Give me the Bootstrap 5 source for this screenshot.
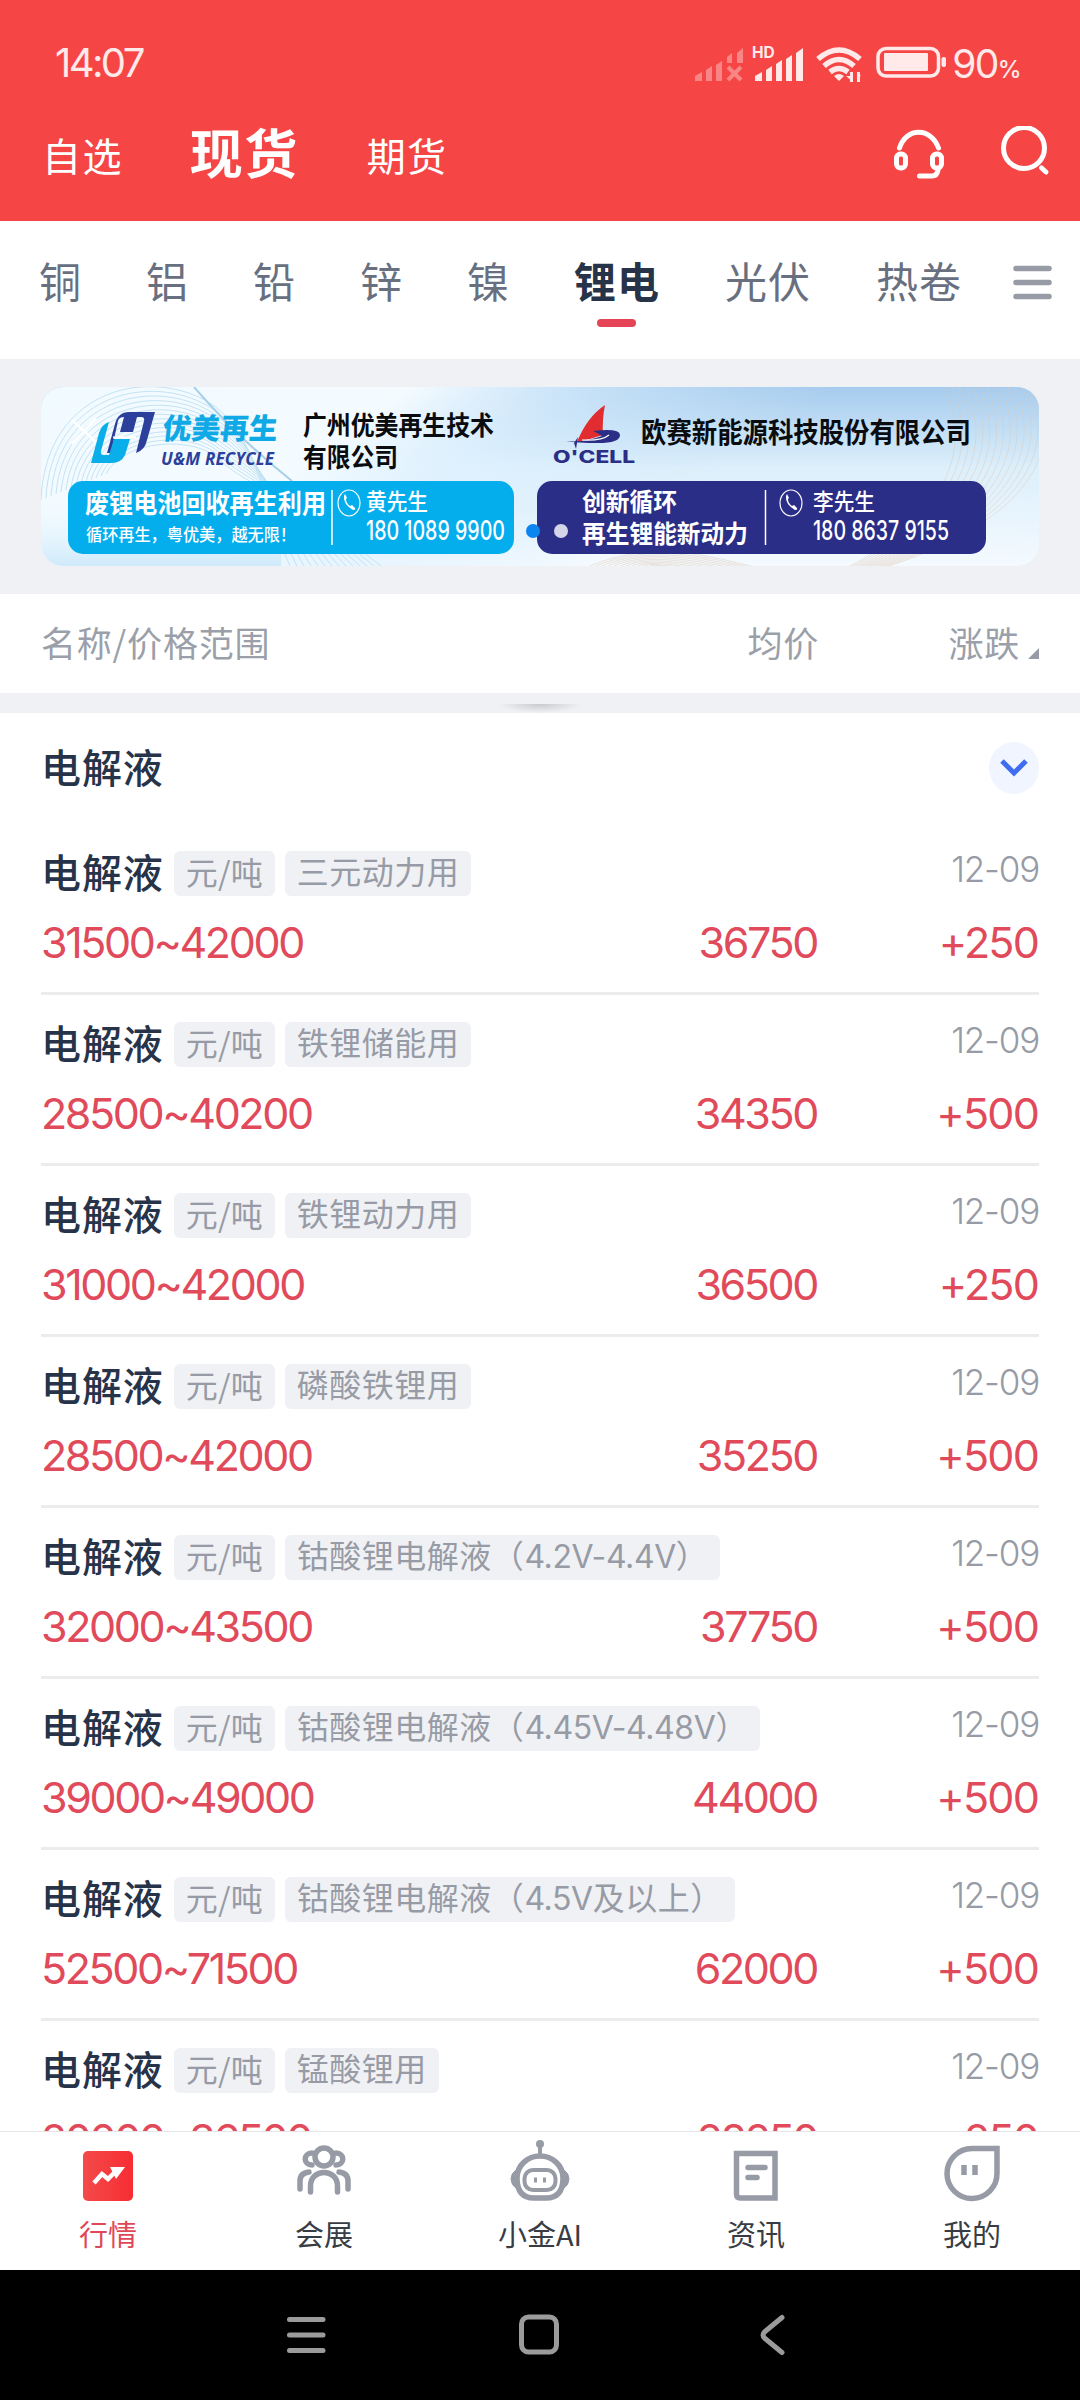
<!DOCTYPE html>
<html lang="zh-CN">
<head>
<meta charset="utf-8">
<meta name="viewport" content="width=device-width, initial-scale=1">
<title>现货行情</title>
<link href="https://cdn.jsdelivr.net/npm/bootstrap@5.3.0/dist/css/bootstrap.min.css" rel="stylesheet">
<style>
  body{width:1080px;height:2400px;overflow:hidden;background:#fff;color:#273349;font-family:Inter,"Noto Sans CJK SC",sans-serif;line-height:1}
  svg{display:block;flex:none}
  .cjk{font-family:"Noto Sans CJK SC",sans-serif}
  .top-bar{background:#f54545;height:221px;color:#fff}
  .status-row{height:126px;padding:0 60px 0 55px;color:#ffe9e9}
  .clock{font-size:40px;letter-spacing:-2.6px}
  .pct{font-size:39px;letter-spacing:-1.6px}
  .pct span{font-size:24px;font-weight:500}
  .main-tabs{height:95px;padding:0 30px 0 42px}
  .main-tabs .tab-s{font-size:39px;letter-spacing:1.4px;line-height:57px}
  .main-tabs .tab-l{font-size:53px;font-weight:700;line-height:50px;letter-spacing:1.4px;margin:0 68px 0 67px}
  .metal-tabs{height:139px;padding:0 27px 0 39px;color:#68707f;font-size:42px;border-bottom:1px solid #f0f1f3}
  .metal-tabs a{color:inherit;text-decoration:none;line-height:69px;letter-spacing:1px}
  .metal-tabs .now{color:#273349;font-weight:700;position:relative}
  .metal-tabs .now::after{content:"";position:absolute;left:23px;top:74px;width:39px;height:8px;border-radius:4px;background:#e64557}
  .ad-wrap{background:#f0f1f4;padding:27px 41px 28px;height:234px}
  .ad-wrap svg{border-radius:22px}
  .col-head{height:99px;padding:0 41px 4px;color:#9a9fa9;font-size:35px;letter-spacing:.8px}
  .col-head .avg{width:300px;text-align:right}
  .col-head .chg{width:220px}
  .strip{height:20px;background:#f0f1f4}
  .handle{width:84px;height:9px;margin-top:11px;background:radial-gradient(ellipse 50% 100% at 50% 0,#c9cacd,#f0f1f4)}
  .market{height:1418px;overflow:hidden;padding:0 41px}
  .sec-head{height:111px;padding-bottom:1px}
  .nm{font-size:40px;letter-spacing:.9px;font-weight:500;color:#273349;margin-top:-4px}
  .quote{height:171px;border-bottom:3px solid #ececed;padding-top:24px}
  .quote .line1{height:50px}
  .tagx{background:#f0f1f4;border-radius:6px;height:45px;line-height:44px;font-size:32px;letter-spacing:.5px;color:#979ba5;padding:0 12px;margin-left:10px;white-space:pre}
  .tagx.cjk{line-height:41px;letter-spacing:.2px}
  .tagx i{font-style:normal;letter-spacing:-.4px}
  .day{font-size:35px;color:#979ba5;font-weight:300;letter-spacing:-1.2px;margin-top:-8px}
  .line2{color:#e04a5a;font-size:43px;letter-spacing:-2.4px;margin-top:19px;line-height:50px}
  .line2 .rng{width:476px}.line2 .mid{width:301px;text-align:right;padding-right:1px}.line2 .dif{width:221px;text-align:right;letter-spacing:-1.8px;padding-right:1px}
  .tabs-bottom{height:139px;border-top:1px solid #e5e6e8;background:#fff;font-size:29px;color:#383c44}
  .tabs-bottom>div{width:216px;padding-top:8px}
  .tabs-bottom .lbl{line-height:40px;margin-top:7px}
  .sysnav{background:#000;height:130px}
</style>
</head>
<body>
<header class="top-bar">
  <div class="status-row d-flex align-items-center justify-content-between">
    <span class="clock">14:07</span>
    <div class="d-flex align-items-center">
      <svg width="257" height="40" viewBox="696 44 257 40" fill="#ffe9e9">
        <g opacity=".4"><path d="M696 82v-5l7-4v9zM707 82V71l6-4v15zM717 82V66l6-4v20zM728 64v-6l5-4v10zM738 64V54l6-5v15z"/><path d="M729 68l13 13M742 68l-13 13" stroke="#ffe9e9" stroke-width="4"/></g>
        <path d="M756 82v-5l7-4v9zM767 82V71l6-4v15zM777 82V65l6-4v21zM787 82V60l6-4v26zM797 82V54l7-5v33z"/>
        <text x="753" y="59" font-size="15.500" font-weight="700" font-family="Inter">HD</text>
        <g fill="none" stroke="#ffe9e9" stroke-width="5.500"><path d="M819 60Q840 42 861 60"/><path d="M825 67Q840 54 855 67"/><path d="M831 73Q840 66 849 73"/></g>
        <path d="M835 77q5-4 10 0l-5 5zM851 73h3v10h-3zM858 73h3v10h-3z"/><path d="M847 77h7v6zM858 73l4 4h-4z"/>
        <rect x="879" y="49.500" width="60.500" height="27.500" rx="8" fill="none" stroke="#ffe9e9" stroke-width="3.500"/><rect x="885" y="54" width="44" height="18" rx="1"/><rect x="942.500" y="58" width="4.500" height="10" rx="2"/>
      </svg>
      <span class="pct">90<span>%</span></span>
    </div>
  </div>
  <nav class="main-tabs cjk d-flex align-items-start">
    <span class="tab-s">自选</span><span class="tab-l">现货</span><span class="tab-s">期货</span>
    <svg class="ms-auto" width="160" height="56" viewBox="890 126 160 56" fill="none" stroke="#fff" stroke-width="5" stroke-linecap="round"><path d="M899.500 148C906 127 931 127 938.500 148"/><rect x="896.500" y="154" width="9" height="14" rx="4"/><rect x="932.500" y="154" width="9" height="14" rx="4"/><path d="M938 169v1q-1 6-6 6H919.500"/><circle cx="1024" cy="148" r="20.500"/><path d="M1041.500 168l4.500 4"/></svg>
  </nav>
</header>
<nav class="metal-tabs cjk d-flex justify-content-between pt-4">
  <div class="d-flex w-100" id="metals">
    <a style="width:107px">铜</a><a style="width:107px">铝</a><a style="width:107px">铅</a><a style="width:107px">锌</a><a style="width:107px">镍</a><a class="now" style="width:151px">锂电</a><a style="width:151px">光伏</a><a>热卷</a>
  </div>
  <svg class="mt-3" width="40" height="40" viewBox="0 0 40 40" stroke="#979ba5" stroke-width="5.500" stroke-linecap="round"><path d="M3 7.500h33M3 21.500h33M3 35.500h33"/></svg>
</nav>
<section class="ad-wrap">
  <svg width="998" height="179" viewBox="41 387 998 179" font-family="'Noto Sans CJK SC',sans-serif">
    <defs>
      <linearGradient id="sky" x1="0" y1="0" x2="0" y2="1"><stop offset="0" stop-color="#a6ccee"/><stop offset=".45" stop-color="#dceffb"/><stop offset="1" stop-color="#f4faff"/></linearGradient>
      <linearGradient id="fade" x1="0" y1="0" x2="1" y2=".25"><stop offset="0" stop-color="#f1faff"/><stop offset=".35" stop-color="#f4fbff"/><stop offset=".5" stop-color="#e0f2ff" stop-opacity=".6"/><stop offset=".75" stop-color="#cfe8fa" stop-opacity="0"/></linearGradient>
      <linearGradient id="um" x1="0" y1="0" x2="0" y2="1"><stop offset="0" stop-color="#f6fcff" stop-opacity="0"/><stop offset="1" stop-color="#cfeafa"/></linearGradient>
    </defs>
    <rect x="41" y="387" width="998" height="179" fill="url(#sky)"/><rect x="41" y="387" width="998" height="179" fill="url(#fade)"/><rect x="41" y="490" width="240" height="76" fill="url(#um)"/>
    <g id="waves" fill="none" stroke="#c3e2f3" stroke-width="1"></g><g id="gold" fill="none" stroke="#dfc9b5" stroke-width=".8" opacity=".6"></g>
    <path d="M194 387Q240 440 292 481" stroke="#a7cfe9" stroke-width="2" fill="none"/>
    <path d="M72 420l26 24M96 418l-24 26" stroke="#fff" stroke-width="2.500"/>
    <path fill="#2b3f9b" d="M107 453l8-29q3-12 14-12h26l-8 28q-2 10-11 13l8-32q1-4-3-4h-4l-4 15h-13l4-15q-5 0-6 4l-7 32z"/>
    <path fill="#0aaee9" d="M109 422l-8 29q-1 4 3 4h5l5-16h16l-5 16q-4 8-13 8H91l8-30q3-9 10-11z"/>
    <path d="M113 437.500h23" stroke="#fff" stroke-width="2"/>
    <text x="161" y="439" font-size="29" font-weight="900" fill="#0fa9e6" transform="skewX(-6) translate(47 0)" textLength="115" lengthAdjust="spacingAndGlyphs">优美再生</text>
    <text x="161" y="464.500" font-size="17" font-weight="700" font-style="italic" font-family="Open Sans" fill="#2b3f9b" textLength="113" lengthAdjust="spacing">U&amp;M RECYCLE</text>
    <g fill="#0a0c10" font-weight="700" font-size="26"><text x="303" y="435" textLength="191" lengthAdjust="spacingAndGlyphs">广州优美再生技术</text><text x="303" y="467" textLength="95" lengthAdjust="spacingAndGlyphs">有限公司</text><text x="641" y="443" font-size="28" textLength="330" lengthAdjust="spacingAndGlyphs">欧赛新能源科技股份有限公司</text></g>
    <rect x="68" y="481" width="446" height="73" rx="15" fill="#04aeed"/>
    <rect x="537" y="481" width="449" height="73" rx="15" fill="#2b2e87"/>
    <g fill="#fff" font-weight="700">
      <text x="85" y="513" font-size="26" textLength="241" lengthAdjust="spacingAndGlyphs">废锂电池回收再生利用</text>
      <text x="86" y="541" font-size="16.500" font-weight="500" textLength="210" lengthAdjust="spacingAndGlyphs">循环再生，粤优美，越无限！</text>
      <text x="582" y="511" font-size="25" textLength="95" lengthAdjust="spacingAndGlyphs">创新循环</text><text x="582" y="542.500" font-size="25" textLength="166" lengthAdjust="spacingAndGlyphs">再生锂能新动力</text>
      <g font-weight="500" font-size="23"><text x="366" y="510" textLength="62" lengthAdjust="spacingAndGlyphs">黄先生</text><text x="813" y="510" textLength="62" lengthAdjust="spacingAndGlyphs">李先生</text></g>
      <g font-family="Inter" font-weight="500" font-size="27"><text x="366" y="540" textLength="139" lengthAdjust="spacingAndGlyphs">180 1089 9900</text><text x="813" y="540" textLength="136" lengthAdjust="spacingAndGlyphs">180 8637 9155</text></g>
    </g>
    <path d="M332 490v55M765.500 490v55" stroke="#fff" stroke-width="1.500"/>
    <g id="tel"><ellipse cx="349" cy="503" rx="11" ry="13" fill="none" stroke="#fff" stroke-width="1.200"/><path d="M344 496q-1 8 9 14 3 0 2-2l-3-3-2 1q-4-3-4-7l1-1-2-4z" fill="#fff"/></g><use href="#tel" x="442"/>
    <path fill="#e12d2f" d="M605 405q-18 12-28 37 14-3 26-7-1-15 2-30z"/><path fill="#2b2e87" d="M566 441q18 2 36-5-4-3-9-5 27-3 27 4 0 8-22 8-20 0-32-2zM574 443l4-6-2 12z"/><path d="M582 440q20 1 27-5" stroke="#fff" stroke-width="1.200" fill="none"/>
    <text x="553" y="463" font-size="17" font-weight="800" font-family="Inter" fill="#2b2e87" textLength="82" lengthAdjust="spacingAndGlyphs">O'CELL</text>
    <circle cx="533" cy="531" r="7" fill="#0b86f0"/><circle cx="561" cy="531" r="7" fill="#d5d5ea"/>
  </svg>
</section>
<div class="col-head cjk d-flex align-items-center">
  <span class="flex-grow-1">名称/价格范围</span><span class="avg">均价</span>
  <div class="chg d-flex justify-content-end align-items-center">涨跌<svg width="11" height="11" class="ms-2 mt-4" viewBox="0 0 11 11"><path d="M11 0v11H0z" fill="#979ba5"/></svg></div>
</div>
<div class="strip d-flex justify-content-center"><div class="handle"></div></div>
<main class="market">
  <div class="sec-head d-flex align-items-center justify-content-between">
    <span class="nm cjk">电解液</span>
    <svg width="50" height="52" viewBox="0 0 50 52"><ellipse cx="25" cy="26" rx="25" ry="26" fill="#f1f5ff"/><path d="M13 19l12 12 12-12" fill="none" stroke="#3f6df0" stroke-width="5"/></svg>
  </div>
  <div id="quotes"></div>
</main>
<footer>
  <div class="tabs-bottom cjk d-flex text-center">
    <div style="color:#df4858"><svg class="mx-auto" width="60" height="66" viewBox="0 0 60 66"><defs><linearGradient id="rd"><stop stop-color="#f44a4a"/><stop offset="1" stop-color="#f72d33"/></linearGradient></defs><rect x="5" y="11" width="50" height="50" rx="5" fill="url(#rd)"/><path d="M16 43l8-9 6 5 9-9" fill="none" stroke="#fff" stroke-width="4.500"/><path d="M32 27h15l-9 12z" fill="#fff"/></svg><div class="lbl">行情</div></div>
    <div><svg class="mx-auto" width="60" height="66" viewBox="0 0 60 66" fill="none" stroke="#979ba5" stroke-width="5.500" stroke-linecap="round"><circle cx="30" cy="17" r="9"/><path d="M16.500 52V46C16.500 28 43.500 28 43.500 46v6M18 13c-9 0-9 12 0 12M42 13c9 0 9 12 0 12M6 49V41q0-8 9-9M54 49V41q0-8-9-9"/></svg><div class="lbl">会展</div></div>
    <div><svg class="mx-auto" width="64" height="66" viewBox="0 0 64 66" fill="none" stroke="#979ba5" stroke-width="5.500"><circle cx="32" cy="4" r="4" fill="#979ba5" stroke="none"/><path d="M32 7v8" stroke-width="4"/><path d="M32 16C44 16 55 25 55 38 55 52 49 58 38 58H26C15 58 9 52 9 38 9 25 20 16 32 16z"/><rect x="16.500" y="30" width="31" height="20" rx="8.500" stroke-width="4"/><path d="M27.500 37.500v5M36.500 37.500v5" stroke-width="3"/><path d="M9 29v20q-6-4-6-10t6-10zM55 29v20q6-4 6-10t-6-10z" fill="#979ba5" stroke-width="1"/></svg><div class="lbl">小金AI</div></div>
    <div><svg class="mx-auto" width="60" height="66" viewBox="0 0 60 66" fill="none" stroke="#979ba5" stroke-width="5.500"><path d="M10.500 13.500h38.500V58H14q-3.500 0-3.500-4z"/><path d="M22 27.500h17M22 37.500h9" stroke-linecap="round"/></svg><div class="lbl">资讯</div></div>
    <div><svg class="mx-auto" width="60" height="66" viewBox="0 0 60 66" fill="none" stroke="#979ba5" stroke-width="5.500"><path d="M30 8.500H55V33A25 25 0 1 1 30 8.500z"/><path d="M22 25v10M33 25v10"/></svg><div class="lbl">我的</div></div>
  </div>
  <div class="sysnav"><svg width="1080" height="130" viewBox="0 2270 1080 130" fill="none" stroke="#9b9b9b" stroke-width="5" stroke-linecap="round" stroke-linejoin="round"><path d="M289.500 2319.500h33.500M289.500 2335h33.500M289.500 2350.500h33.500"/><rect x="521.500" y="2317" width="35" height="35" rx="7"/><path d="M782 2317.500l-17 14q-4 3.500 0 7l17 14"/></svg></div>
</footer>
<script src="https://cdn.jsdelivr.net/npm/bootstrap@5.3.0/dist/js/bootstrap.bundle.min.js"></script>
<script>
const data=[['三元动力用','31500~42000','36750','+250'],['铁锂储能用','28500~40200','34350','+500'],['铁锂动力用','31000~42000','36500','+250'],['磷酸铁锂用','28500~42000','35250','+500'],['钴酸锂电解液（4.2V-4.4V）','32000~43500','37750','+500'],['钴酸锂电解液（4.45V-4.48V）','39000~49000','44000','+500'],['钴酸锂电解液（4.5V及以上）','52500~71500','62000','+500'],['锰酸锂用','20000~36500','28250','+250']];
document.getElementById('quotes').innerHTML=data.map(r=>`<div class="quote"><div class="line1 d-flex align-items-center"><span class="nm cjk">电解液</span><span class="tagx cjk">元/吨</span><span class="tagx">${r[0].replace(/[\d.V-]+/,m=>`<i>${m}</i>`)}</span><span class="day ms-auto">12-09</span></div><div class="line2 d-flex"><span class="rng">${r[1]}</span><span class="mid">${r[2]}</span><span class="dif">${r[3]}</span></div></div>`).join('');
// fine contour lines behind the banner
let w='',g='';
for(let i=0;i<14;i++){w+=`<path d="M${41+i*5} ${500-i*2}C${45+i*6} ${400+i*3} ${130+i*5} ${370+i*5} ${194+i*2} ${395+i*5}S${260+i*3} 500 ${290+i*7} 566"/>`;g+=`<path d="M${945+i*7} 387C${980+i*7} 470 ${920+i*6} 530 ${850+i*3} 566S${700-i*4} ${520+i*4} ${590+i*6} 566"/>`}
document.getElementById('waves').innerHTML=w;document.getElementById('gold').innerHTML=g;
</script>
</body>
</html>
